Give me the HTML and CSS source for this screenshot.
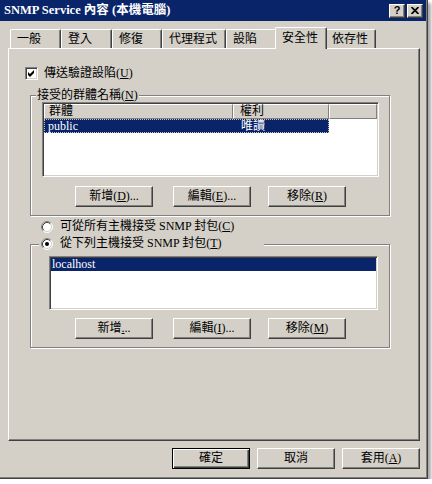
FILE: index.html
```html
<!DOCTYPE html>
<html>
<head>
<meta charset="utf-8">
<link rel="stylesheet" href="styles.css">
</head>
<body>
<div class="window">
  <div class="titlebar">
    <span class="title">SNMP Service 內容 (本機電腦)</span>
    <span class="tb-btns">
      <span class="tb-btn help">?</span>
      <span class="tb-btn"><svg width="8" height="7" viewBox="0 0 8 7"><path d="M0.5 0 L7.5 7 M7.5 0 L0.5 7" stroke="#000" stroke-width="1.7" fill="none"/></svg></span>
    </span>
  </div>
  <div class="content">
    <div class="tabs">
      <div class="tab w51">一般</div>
      <div class="tab w51">登入</div>
      <div class="tab w50">修復</div>
      <div class="tab w64">代理程式</div>
      <div class="tab w51">設陷</div>
      <div class="tab sel">安全性</div>
      <div class="tab w51">依存性</div>
    </div>
    <div class="panel">
      <div class="chk">
        <span class="cbox"><svg width="9" height="9" viewBox="0 0 9 9"><path d="M1 3 L3 5 L7 1 L7 4 L3 8 L1 6 Z" fill="#000"/></svg></span>
        <span>傳送驗證設陷(<u>U</u>)</span>
      </div>
      <div class="group g1">
        <span class="legend">接受的群體名稱(<u>N</u>)</span>
        <div class="list list1">
          <div class="hdr">
            <span class="hc hc1">群體</span>
            <span class="hc hc2">權利</span>
            <span class="hc hc3"></span>
          </div>
          <div class="row sel-row focus">
            <span class="rc1">public</span>
            <span class="rc2">唯讀</span>
          </div>
        </div>
        <div class="btnrow">
          <span class="btn">新增(<u>D</u>)...</span>
          <span class="btn b2">編輯(<u>E</u>)...</span>
          <span class="btn b3">移除(<u>R</u>)</span>
        </div>
      </div>
      <div class="radio r1">
        <svg width="12" height="12" viewBox="0 0 12 12"><circle cx="6" cy="6" r="5" fill="#fff"/><path d="M2.11 9.89 A5.5 5.5 0 0 1 9.89 2.11" stroke="#808080" fill="none"/><path d="M9.89 2.11 A5.5 5.5 0 0 1 2.11 9.89" stroke="#fff" fill="none"/><path d="M2.82 9.18 A4.5 4.5 0 0 1 9.18 2.82" stroke="#404040" fill="none"/><path d="M9.18 2.82 A4.5 4.5 0 0 1 2.82 9.18" stroke="#d4d0c8" fill="none"/></svg>
        <span>可從所有主機接受 SNMP 封包(<u>C</u>)</span>
      </div>
      <div class="group g2">
        <div class="radio legend2">
          <svg width="12" height="12" viewBox="0 0 12 12"><circle cx="6" cy="6" r="5" fill="#fff"/><path d="M2.11 9.89 A5.5 5.5 0 0 1 9.89 2.11" stroke="#808080" fill="none"/><path d="M9.89 2.11 A5.5 5.5 0 0 1 2.11 9.89" stroke="#fff" fill="none"/><path d="M2.82 9.18 A4.5 4.5 0 0 1 9.18 2.82" stroke="#404040" fill="none"/><path d="M9.18 2.82 A4.5 4.5 0 0 1 2.82 9.18" stroke="#d4d0c8" fill="none"/><circle cx="6" cy="6" r="2" fill="#000"/></svg>
          <span>從下列主機接受 SNMP 封包(<u>T</u>)</span>
        </div>
        <div class="list list2">
          <div class="row2">localhost</div>
        </div>
        <div class="btnrow br2">
          <span class="btn">新增<u>.</u>..</span>
          <span class="btn b2">編輯(<u>I</u>)...</span>
          <span class="btn b3">移除(<u>M</u>)</span>
        </div>
      </div>
    </div>
    <div class="bottom">
      <span class="btn default">確定</span>
      <span class="btn">取消</span>
      <span class="btn">套用(<u>A</u>)</span>
    </div>
  </div>
</div>
</body>
</html>
```
FILE: styles.css
```css
* { box-sizing: border-box; }
html, body { margin: 0; padding: 0; background: #fff; }
body {
  font-family: "Liberation Serif", "Noto Sans CJK TC", serif;
  font-size: 12px;
  line-height: 13px;
  color: #000;
}
u { text-decoration: underline; text-underline-offset: 1px; }

.window {
  width: 428px;
  height: 479px;
  background: #d4d0c8;
  border-right: 1px solid #404040;
  border-bottom: 1px solid #404040;
  box-shadow: inset -1px -1px 0 #808080, 3px 3px 3px rgba(0,0,0,0.35);
}

.titlebar {
  width: 426px;
  height: 21px;
  background: #0a246a;
  display: flex;
  align-items: center;
  justify-content: space-between;
  padding: 0 3px 0 4px;
}
.title {
  color: #fff;
  font-weight: bold;
  font-size: 12.5px;
  line-height: 15px;
  white-space: nowrap;
}
.tb-btns { display: flex; gap: 2px; }
.tb-btn {
  width: 16px;
  height: 14px;
  background: #d4d0c8;
  border: 1px solid;
  border-color: #fff #404040 #404040 #fff;
  box-shadow: inset -1px -1px 0 #808080;
  display: flex;
  align-items: center;
  justify-content: center;
}
.tb-btn.help {
  font-family: "Liberation Sans", sans-serif;
  font-weight: bold;
  font-size: 11px;
  line-height: 11px;
}

.content { padding: 6px 0 0 8px; }

.tabs {
  display: flex;
  align-items: flex-end;
  height: 21px;
  padding-left: 2px;
}
.tab {
  height: 19px;
  padding: 3px 0 0 6px;
  border-top: 1px solid #fff;
  border-left: 1px solid #fff;
  border-right: 1px solid #404040;
  box-shadow: inset -1px 0 0 #808080;
  border-radius: 2px 2px 0 0;
  white-space: nowrap;
}
.w50 { width: 50px; }
.w51 { width: 51px; }
.w64 { width: 64px; }
.tab.sel {
  width: 52px;
  height: 22px;
  margin: 0 -2px -1px;
  padding-top: 4px;
  position: relative;
  z-index: 1;
  background: #d4d0c8;
}

.panel {
  width: 412px;
  height: 393px;
  border-top: 1px solid #fff;
  border-left: 1px solid #fff;
  border-right: 1px solid #404040;
  border-bottom: 1px solid #404040;
  box-shadow: inset -1px -1px 0 #808080;
}

.chk {
  display: flex;
  align-items: center;
  gap: 6px;
  height: 13px;
  margin: 18px 0 0 16px;
}
.cbox {
  width: 13px;
  height: 13px;
  background: #fff;
  border: 1px solid;
  border-color: #808080 #fff #fff #808080;
  box-shadow: inset 1px 1px 0 #404040, inset -1px -1px 0 #d4d0c8;
  display: flex;
  align-items: center;
  justify-content: center;
}

.group {
  position: relative;
  width: 360px;
  margin-left: 21px;
  border: 1px solid #808080;
  box-shadow: inset 1px 1px 0 #fff, 1px 1px 0 #fff;
}
.g1 {
  margin-top: 15px;
  height: 121px;
  padding: 6px 0 0 11px;
}
.legend {
  position: absolute;
  top: -7px;
  left: 5px;
  padding: 0 1px;
  background: #d4d0c8;
  white-space: nowrap;
}

.list {
  background: #fff;
  border: 1px solid;
  border-color: #808080 #fff #fff #808080;
  box-shadow: inset 1px 1px 0 #404040, inset -1px -1px 0 #d4d0c8;
  padding: 1px;
}
.list1 { width: 337px; height: 75px; }
.hdr { display: flex; height: 15px; }
.hc {
  height: 15px;
  background: #d4d0c8;
  border-top: 1px solid #fff;
  border-left: 1px solid #fff;
  border-right: 1px solid #808080;
  border-bottom: 1px solid #808080;
  line-height: 13px;
}
.hc1 { width: 189px; padding-left: 4px; }
.hc2 { width: 96px; padding-left: 6px; }
.hc3 { flex: 1; }
.row {
  display: flex;
  width: 285px;
  height: 14px;
  background: #0a246a;
  color: #fff;
  border: 1px dotted #c8c4bc;
  line-height: 12px;
}
.rc1 { width: 189px; padding-left: 3px; }
.rc2 { padding-left: 7px; }

.btnrow { display: flex; margin: 9px 0 0 33px; }
.btn {
  width: 78px;
  height: 21px;
  background: #d4d0c8;
  border: 1px solid;
  border-color: #fff #404040 #404040 #fff;
  box-shadow: inset -1px -1px 0 #808080;
  display: flex;
  align-items: center;
  justify-content: center;
  white-space: nowrap;
}
.btn.b2 { margin-left: 20px; }
.btn.b3 { margin-left: 17px; }

.radio {
  display: flex;
  align-items: center;
  gap: 7px;
  height: 13px;
  white-space: nowrap;
}
.r1 { margin: 4px 0 0 32px; }

.g2 {
  margin-top: 11px;
  height: 104px;
  padding: 11px 0 0 18px;
}
.legend2 {
  position: absolute;
  top: -8px;
  left: 8px;
  width: 225px;
  padding-left: 2px;
  background: #d4d0c8;
}
.list2 { width: 329px; height: 54px; }
.row2 {
  height: 13px;
  background: #0a246a;
  color: #fff;
  padding-left: 1px;
  line-height: 12px;
}
.br2 { margin: 8px 0 0 26px; }

.bottom {
  display: flex;
  gap: 7px;
  margin: 7px 0 0 164px;
}
.btn.default {
  border: 1px solid #000;
  box-shadow: inset 1px 1px 0 #fff, inset -1px -1px 0 #404040, inset -2px -2px 0 #808080;
}
```
